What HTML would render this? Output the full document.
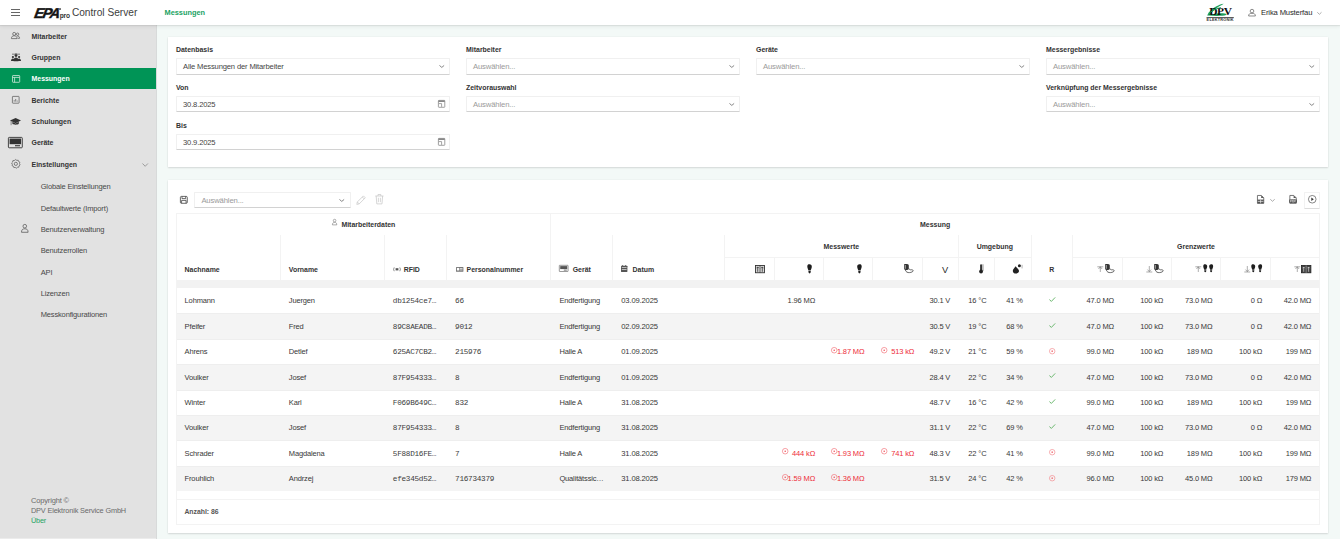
<!DOCTYPE html><html><head><meta charset="utf-8"><style>
html,body{margin:0;padding:0;}
body{width:1340px;height:539px;overflow:hidden;position:relative;background:#f3f9f7;font-family:"Liberation Sans", sans-serif;}
.t{position:absolute;white-space:nowrap;}
svg{overflow:visible}
</style></head><body>
<div style="position:absolute;left:157.00px;top:25.00px;width:1183.00px;height:514.00px;background:#f3f9f7"></div>
<div style="position:absolute;left:167.60px;top:36.80px;width:1160.40px;height:129.90px;background:#fff;box-shadow:0 1px 1.6px rgba(0,0,0,0.12),0 0 1.5px rgba(0,0,0,0.07)"></div>
<div style="position:absolute;left:167.60px;top:179.80px;width:1160.40px;height:353.00px;background:#fff;box-shadow:0 1px 1.6px rgba(0,0,0,0.12),0 0 1.5px rgba(0,0,0,0.07)"></div>
<div style="position:absolute;left:0.00px;top:25.00px;width:156.00px;height:514.00px;background:#e2e2e2"></div>
<div style="position:absolute;left:156.00px;top:25.00px;width:1.20px;height:514.00px;background:#d8dada"></div>
<div style="position:absolute;left:0.00px;top:537.50px;width:156.00px;height:1.50px;background:#ececec"></div>
<div class="t" style="left:31.50px;top:32.52px;font-size:6.95px;line-height:8.34px;color:#333;font-weight:bold;font-family:'Liberation Sans', sans-serif;">Mitarbeiter</div>
<div class="t" style="left:31.50px;top:53.86px;font-size:6.95px;line-height:8.34px;color:#333;font-weight:bold;font-family:'Liberation Sans', sans-serif;">Gruppen</div>
<div style="position:absolute;left:0.00px;top:67.67px;width:156.00px;height:21.33px;background:#009456"></div>
<div class="t" style="left:31.50px;top:75.19px;font-size:6.95px;line-height:8.34px;color:#fff;font-weight:bold;font-family:'Liberation Sans', sans-serif;">Messungen</div>
<div class="t" style="left:31.50px;top:96.52px;font-size:6.95px;line-height:8.34px;color:#333;font-weight:bold;font-family:'Liberation Sans', sans-serif;">Berichte</div>
<div class="t" style="left:31.50px;top:117.86px;font-size:6.95px;line-height:8.34px;color:#333;font-weight:bold;font-family:'Liberation Sans', sans-serif;">Schulungen</div>
<div class="t" style="left:31.50px;top:139.19px;font-size:6.95px;line-height:8.34px;color:#333;font-weight:bold;font-family:'Liberation Sans', sans-serif;">Geräte</div>
<div class="t" style="left:31.50px;top:160.52px;font-size:6.95px;line-height:8.34px;color:#333;font-weight:bold;font-family:'Liberation Sans', sans-serif;">Einstellungen</div>
<div class="t" style="left:40.70px;top:182.43px;font-size:7.5px;line-height:9.0px;color:#484848;font-weight:normal;font-family:'Liberation Sans', sans-serif;letter-spacing:-0.15px;">Globale Einstellungen</div>
<div class="t" style="left:40.70px;top:203.77px;font-size:7.5px;line-height:9.0px;color:#484848;font-weight:normal;font-family:'Liberation Sans', sans-serif;letter-spacing:-0.15px;">Defaultwerte (Import)</div>
<div class="t" style="left:40.70px;top:225.10px;font-size:7.5px;line-height:9.0px;color:#484848;font-weight:normal;font-family:'Liberation Sans', sans-serif;letter-spacing:-0.15px;">Benutzerverwaltung</div>
<div class="t" style="left:40.70px;top:246.43px;font-size:7.5px;line-height:9.0px;color:#484848;font-weight:normal;font-family:'Liberation Sans', sans-serif;letter-spacing:-0.15px;">Benutzerrollen</div>
<div class="t" style="left:40.70px;top:267.77px;font-size:7.5px;line-height:9.0px;color:#484848;font-weight:normal;font-family:'Liberation Sans', sans-serif;letter-spacing:-0.15px;">API</div>
<div class="t" style="left:40.70px;top:289.10px;font-size:7.5px;line-height:9.0px;color:#484848;font-weight:normal;font-family:'Liberation Sans', sans-serif;letter-spacing:-0.15px;">Lizenzen</div>
<div class="t" style="left:40.70px;top:310.43px;font-size:7.5px;line-height:9.0px;color:#484848;font-weight:normal;font-family:'Liberation Sans', sans-serif;letter-spacing:-0.15px;">Messkonfigurationen</div>
<svg style="position:absolute;left:142.00px;top:162.60px" width="6.4" height="4" viewBox="0 0 6.4 4"><path d="M0.5 0.5 L3.2 3.3 L5.9 0.5" fill="none" stroke="#8a8a8a" stroke-width="0.8"/></svg>
<svg style="position:absolute;left:11.00px;top:32.20px" width="9" height="7" viewBox="0 0 9 7"><g fill="none" stroke="#555" stroke-width="0.7"><circle cx="3.2" cy="1.9" r="1.5"/><path d="M0.4 6.6 C0.4 4.4 1.6 3.8 3.2 3.8 C4.8 3.8 6 4.4 6 6.6 Z"/><circle cx="6.6" cy="2.2" r="1.2"/><path d="M6.2 4 C7.6 4 8.6 4.6 8.6 6.3 L6.6 6.3"/></g></svg>
<svg style="position:absolute;left:10.60px;top:53.00px" width="10" height="8.3" viewBox="0 0 10 8.3"><g fill="#333"><circle cx="5" cy="2.6" r="1.4"/><path d="M2.6 8.3 C2.6 5.6 3.6 4.6 5 4.6 C6.4 4.6 7.4 5.6 7.4 8.3Z"/><circle cx="1.9" cy="4" r="1.1"/><path d="M0 8 C0 6.2 0.8 5.4 1.9 5.4 C3 5.4 3.3 6 3.3 8Z"/><circle cx="8.1" cy="4" r="1.1"/><path d="M6.7 8 C6.7 6 7 5.4 8.1 5.4 C9.2 5.4 10 6.2 10 8Z"/><rect x="1" y="0.8" width="8" height="0.6"/><rect x="4.7" y="0" width="0.6" height="1.2"/></g></svg>
<svg style="position:absolute;left:11.70px;top:75.20px" width="8.2" height="7.8" viewBox="0 0 8.2 7.8"><g fill="none" stroke="#cfe9dc" stroke-width="0.8"><rect x="0.5" y="0.5" width="7.2" height="6.8" rx="0.6"/><path d="M0.5 2.4 H7.7 M2.6 2.4 V7.3"/></g></svg>
<svg style="position:absolute;left:11.80px;top:96.30px" width="7.5" height="7.6" viewBox="0 0 7.5 7.6"><g fill="none" stroke="#555" stroke-width="0.7"><rect x="0.4" y="0.4" width="6.7" height="6.8" rx="0.5"/><path d="M2.2 5.6 V4.2 M3.7 5.6 V3 M5.2 5.6 V4.6"/></g></svg>
<svg style="position:absolute;left:9.80px;top:118.40px" width="11" height="7.6" viewBox="0 0 11 7.6"><g fill="#333"><path d="M0 2.6 L5.6 0 L11 2.6 L5.6 5.2Z"/><path d="M2.4 3.8 V5.8 C3.6 7 7.6 7 8.8 5.8 V3.8 L5.6 5.4Z"/><rect x="0.8" y="2.6" width="0.5" height="4.6"/></g></svg>
<svg style="position:absolute;left:8.20px;top:136.80px" width="14.7" height="11.2" viewBox="0 0 14.7 11.2"><g><rect x="0.4" y="0.4" width="13.9" height="10.4" rx="0.8" fill="none" stroke="#333" stroke-width="0.9"/><rect x="1.6" y="1.6" width="11.5" height="5.6" fill="#333"/><rect x="7" y="8.2" width="5" height="1.1" fill="#333"/></g></svg>
<svg style="position:absolute;left:10.70px;top:159.40px" width="9.5" height="9.5" viewBox="0 0 9.5 9.5"><g fill="none" stroke="#555" stroke-width="0.7"><path d="M4.75 0.5 L5.8 1.4 L7.2 1.2 L7.6 2.5 L8.9 3.2 L8.5 4.6 L9.1 5.9 L8 6.8 L7.8 8.2 L6.4 8.3 L5.3 9.2 L4.2 8.4 L2.8 8.5 L2.3 7.2 L1 6.6 L1.4 5.2 L0.6 4 L1.7 3 L1.9 1.6 L3.3 1.5Z"/><circle cx="4.85" cy="4.85" r="1.6"/></g></svg>
<svg style="position:absolute;left:21.30px;top:224.00px" width="7.6" height="8.7" viewBox="0 0 7.6 8.7"><g fill="none" stroke="#555" stroke-width="0.75"><circle cx="3.8" cy="2.2" r="1.8"/><path d="M0.5 8.3 C0.5 5.6 1.8 4.8 3.8 4.8 C5.8 4.8 7.1 5.6 7.1 8.3 Z"/></g></svg>
<div class="t" style="left:30.90px;top:495.90px;font-size:7.5px;line-height:9.0px;color:#6a6a6a;font-weight:normal;font-family:'Liberation Sans', sans-serif;letter-spacing:-0.15px;">Copyright ©</div>
<div class="t" style="left:30.90px;top:506.64px;font-size:7.35px;line-height:8.82px;color:#6a6a6a;font-weight:normal;font-family:'Liberation Sans', sans-serif;letter-spacing:-0.15px;">DPV Elektronik Service GmbH</div>
<div class="t" style="left:30.90px;top:517.19px;font-size:7.3px;line-height:8.76px;color:#1fa463;font-weight:normal;font-family:'Liberation Sans', sans-serif;letter-spacing:-0.15px;">Über</div>
<div style="position:absolute;left:0.00px;top:0.00px;width:1340.00px;height:25.00px;background:#fff;box-shadow:0 1px 1px rgba(0,0,0,0.07),0 1.5px 4px rgba(0,0,0,0.05)"></div>
<div style="position:absolute;left:11.10px;top:9.00px;width:9.00px;height:0.80px;background:#666"></div>
<div style="position:absolute;left:11.10px;top:11.90px;width:9.00px;height:0.80px;background:#666"></div>
<div style="position:absolute;left:11.10px;top:14.80px;width:9.00px;height:0.80px;background:#666"></div>
<div class="t" style="left:32.60px;top:5.36px;font-size:14.2px;line-height:17.04px;color:#141414;font-weight:bold;font-family:'Liberation Sans', sans-serif;font-style:italic;letter-spacing:-1.2px;transform:skewX(-10deg);transform-origin:0 100%;-webkit-text-stroke:0.45px #141414;">EPA</div>
<div class="t" style="left:59.80px;top:11.95px;font-size:6.6px;line-height:7.92px;color:#333;font-weight:bold;font-family:'Liberation Sans', sans-serif;letter-spacing:-0.2px;">pro</div>
<div style="position:absolute;left:59.30px;top:8.20px;width:1.70px;height:1.70px;border-radius:50%;background:#666"></div>
<div class="t" style="left:71.90px;top:7.18px;font-size:10.16px;line-height:12.192px;color:#404040;font-weight:normal;font-family:'Liberation Sans', sans-serif;">Control Server</div>
<div class="t" style="left:164.50px;top:8.83px;font-size:7.36px;line-height:8.832px;color:#1aa262;font-weight:bold;font-family:'Liberation Sans', sans-serif;">Messungen</div>
<svg style="position:absolute;left:1204.00px;top:2.00px" width="32" height="20" viewBox="0 0 32 20"><path d="M3.2 13.4 C4.5 10 8 6.5 12 4.5 C15 3 17.5 2 19.6 1.8 C19.2 2.6 17 3.2 14.5 4.8 C10.5 7.3 7.5 10.5 5.8 13.2 C9 11.6 16 11 20.5 11.5 C22 11.7 23.5 12.2 22 13 C19 14 12 14.2 3.2 13.4Z" fill="#1e9f5c"/><text x="5.2" y="12.9" font-family="Liberation Serif" font-weight="bold" font-size="11.4" fill="#0d0d0d" letter-spacing="-0.35">DPV</text><path d="M6 10.5 C9 8 13 6.2 17 5.6" fill="none" stroke="#1e9f5c" stroke-width="0.9"/><rect x="2.5" y="15.1" width="27.3" height="0.8" fill="#333"/><text x="2.6" y="18.6" font-family="Liberation Sans" font-weight="bold" font-size="3.6" fill="#333" letter-spacing="0.2" textLength="27.2" lengthAdjust="spacingAndGlyphs">ELEKTRONIK</text></svg>
<svg style="position:absolute;left:1248.00px;top:8.90px" width="8" height="7.4" viewBox="0 0 8 7.4"><g fill="none" stroke="#666" stroke-width="0.75"><circle cx="4" cy="2.1" r="1.8"/><path d="M0.6 7 C0.6 4.9 2 4.3 4 4.3 C6 4.3 7.4 4.9 7.4 7 Z"/></g></svg>
<div class="t" style="left:1261.00px;top:8.26px;font-size:7.65px;line-height:9.18px;color:#2a2a2a;font-weight:normal;font-family:'Liberation Sans', sans-serif;letter-spacing:-0.15px;">Erika Musterfau</div>
<svg style="position:absolute;left:1317.00px;top:11.70px" width="4.8" height="2.6" viewBox="0 0 4.8 2.6"><path d="M0.3 0.3 L2.4 2.3 L4.5 0.3" fill="none" stroke="#888" stroke-width="0.7"/></svg>
<div class="t" style="left:176.00px;top:46.02px;font-size:6.95px;line-height:8.34px;color:#333;font-weight:bold;font-family:'Liberation Sans', sans-serif;">Datenbasis</div>
<div class="t" style="left:466.00px;top:46.02px;font-size:6.95px;line-height:8.34px;color:#333;font-weight:bold;font-family:'Liberation Sans', sans-serif;">Mitarbeiter</div>
<div class="t" style="left:756.00px;top:46.02px;font-size:6.95px;line-height:8.34px;color:#333;font-weight:bold;font-family:'Liberation Sans', sans-serif;">Geräte</div>
<div class="t" style="left:1046.00px;top:46.02px;font-size:6.95px;line-height:8.34px;color:#333;font-weight:bold;font-family:'Liberation Sans', sans-serif;">Messergebnisse</div>
<div class="t" style="left:176.00px;top:84.22px;font-size:6.95px;line-height:8.34px;color:#333;font-weight:bold;font-family:'Liberation Sans', sans-serif;">Von</div>
<div class="t" style="left:466.00px;top:84.22px;font-size:6.95px;line-height:8.34px;color:#333;font-weight:bold;font-family:'Liberation Sans', sans-serif;">Zeitvorauswahl</div>
<div class="t" style="left:1046.00px;top:84.22px;font-size:6.95px;line-height:8.34px;color:#333;font-weight:bold;font-family:'Liberation Sans', sans-serif;">Verknüpfung der Messergebnisse</div>
<div class="t" style="left:176.00px;top:122.32px;font-size:6.95px;line-height:8.34px;color:#333;font-weight:bold;font-family:'Liberation Sans', sans-serif;">Bis</div>
<div style="position:absolute;left:176.00px;top:58.40px;width:274.00px;height:16.20px;background:#fff;border:0.7px solid #f0f0f0;border-bottom:1px solid #d2d2d2;box-sizing:border-box;border-radius:1px"></div>
<div class="t" style="left:183.00px;top:62.31px;font-size:7.6px;line-height:9.12px;color:#444;font-weight:normal;font-family:'Liberation Sans', sans-serif;letter-spacing:-0.15px;">Alle Messungen der Mitarbeiter</div>
<svg style="position:absolute;left:438.90px;top:64.80px" width="5.6" height="2.9" viewBox="0 0 5.6 2.9"><path d="M0.45 0.45 L2.8 2.4 L5.15 0.45" fill="none" stroke="#777" stroke-width="0.9"/></svg>
<div style="position:absolute;left:466.00px;top:58.40px;width:274.00px;height:16.20px;background:#fff;border:0.7px solid #f0f0f0;border-bottom:1px solid #d2d2d2;box-sizing:border-box;border-radius:1px"></div>
<div class="t" style="left:473.00px;top:62.21px;font-size:7.7px;line-height:9.24px;color:#9a9a9a;font-weight:normal;font-family:'Liberation Sans', sans-serif;letter-spacing:-0.15px;">Auswählen...</div>
<svg style="position:absolute;left:728.90px;top:64.80px" width="5.6" height="2.9" viewBox="0 0 5.6 2.9"><path d="M0.45 0.45 L2.8 2.4 L5.15 0.45" fill="none" stroke="#777" stroke-width="0.9"/></svg>
<div style="position:absolute;left:756.00px;top:58.40px;width:274.00px;height:16.20px;background:#fff;border:0.7px solid #f0f0f0;border-bottom:1px solid #d2d2d2;box-sizing:border-box;border-radius:1px"></div>
<div class="t" style="left:763.00px;top:62.21px;font-size:7.7px;line-height:9.24px;color:#9a9a9a;font-weight:normal;font-family:'Liberation Sans', sans-serif;letter-spacing:-0.15px;">Auswählen...</div>
<svg style="position:absolute;left:1018.90px;top:64.80px" width="5.6" height="2.9" viewBox="0 0 5.6 2.9"><path d="M0.45 0.45 L2.8 2.4 L5.15 0.45" fill="none" stroke="#777" stroke-width="0.9"/></svg>
<div style="position:absolute;left:1046.00px;top:58.40px;width:274.00px;height:16.20px;background:#fff;border:0.7px solid #f0f0f0;border-bottom:1px solid #d2d2d2;box-sizing:border-box;border-radius:1px"></div>
<div class="t" style="left:1053.00px;top:62.21px;font-size:7.7px;line-height:9.24px;color:#9a9a9a;font-weight:normal;font-family:'Liberation Sans', sans-serif;letter-spacing:-0.15px;">Auswählen...</div>
<svg style="position:absolute;left:1308.90px;top:64.80px" width="5.6" height="2.9" viewBox="0 0 5.6 2.9"><path d="M0.45 0.45 L2.8 2.4 L5.15 0.45" fill="none" stroke="#777" stroke-width="0.9"/></svg>
<div style="position:absolute;left:176.00px;top:96.20px;width:274.00px;height:16.20px;background:#fff;border:0.7px solid #f0f0f0;border-bottom:1px solid #d2d2d2;box-sizing:border-box;border-radius:1px"></div>
<div class="t" style="left:183.00px;top:100.11px;font-size:7.6px;line-height:9.12px;color:#444;font-weight:normal;font-family:'Liberation Sans', sans-serif;letter-spacing:-0.15px;">30.8.2025</div>
<svg style="position:absolute;left:437.90px;top:100.10px" width="7.2" height="7.7" viewBox="0 0 7.2 7.7"><g><rect x="0.4" y="0.4" width="6.4" height="6.9" rx="0.5" fill="#fff" stroke="#888" stroke-width="0.8"/><rect x="0.4" y="0.4" width="6.4" height="1.6" fill="#888"/><path d="M0.9 3.6 H3.6 V6.9" fill="none" stroke="#999" stroke-width="0.9"/></g></svg>
<div style="position:absolute;left:466.00px;top:96.20px;width:274.00px;height:16.20px;background:#fff;border:0.7px solid #f0f0f0;border-bottom:1px solid #d2d2d2;box-sizing:border-box;border-radius:1px"></div>
<div class="t" style="left:473.00px;top:100.01px;font-size:7.7px;line-height:9.24px;color:#9a9a9a;font-weight:normal;font-family:'Liberation Sans', sans-serif;letter-spacing:-0.15px;">Auswählen...</div>
<svg style="position:absolute;left:728.90px;top:102.60px" width="5.6" height="2.9" viewBox="0 0 5.6 2.9"><path d="M0.45 0.45 L2.8 2.4 L5.15 0.45" fill="none" stroke="#777" stroke-width="0.9"/></svg>
<div style="position:absolute;left:1046.00px;top:96.20px;width:274.00px;height:16.20px;background:#fff;border:0.7px solid #f0f0f0;border-bottom:1px solid #d2d2d2;box-sizing:border-box;border-radius:1px"></div>
<div class="t" style="left:1053.00px;top:100.01px;font-size:7.7px;line-height:9.24px;color:#9a9a9a;font-weight:normal;font-family:'Liberation Sans', sans-serif;letter-spacing:-0.15px;">Auswählen...</div>
<svg style="position:absolute;left:1308.90px;top:102.60px" width="5.6" height="2.9" viewBox="0 0 5.6 2.9"><path d="M0.45 0.45 L2.8 2.4 L5.15 0.45" fill="none" stroke="#777" stroke-width="0.9"/></svg>
<div style="position:absolute;left:176.00px;top:134.00px;width:274.00px;height:16.20px;background:#fff;border:0.7px solid #f0f0f0;border-bottom:1px solid #d2d2d2;box-sizing:border-box;border-radius:1px"></div>
<div class="t" style="left:183.00px;top:137.91px;font-size:7.6px;line-height:9.12px;color:#444;font-weight:normal;font-family:'Liberation Sans', sans-serif;letter-spacing:-0.15px;">30.9.2025</div>
<svg style="position:absolute;left:437.90px;top:137.90px" width="7.2" height="7.7" viewBox="0 0 7.2 7.7"><g><rect x="0.4" y="0.4" width="6.4" height="6.9" rx="0.5" fill="#fff" stroke="#888" stroke-width="0.8"/><rect x="0.4" y="0.4" width="6.4" height="1.6" fill="#888"/><path d="M0.9 3.6 H3.6 V6.9" fill="none" stroke="#999" stroke-width="0.9"/></g></svg>
<svg style="position:absolute;left:180.00px;top:195.90px" width="7.7" height="7.7" viewBox="0 0 7.7 7.7"><g fill="none" stroke="#444" stroke-width="0.8"><rect x="0.4" y="0.4" width="6.9" height="6.9" rx="1"/><path d="M2 0.4 V2.6 H5.7 V0.4 M1.6 4.4 H6.1 V7.3 M1.6 4.4 V7.3"/></g></svg>
<div style="position:absolute;left:194.00px;top:192.40px;width:157.00px;height:16.00px;background:#fff;border:0.7px solid #f0f0f0;border-bottom:1px solid #d2d2d2;box-sizing:border-box;border-radius:1px"></div>
<div class="t" style="left:201.40px;top:195.91px;font-size:7.7px;line-height:9.24px;color:#9a9a9a;font-weight:normal;font-family:'Liberation Sans', sans-serif;letter-spacing:-0.15px;">Auswählen...</div>
<svg style="position:absolute;left:339.40px;top:198.60px" width="5.6" height="2.9" viewBox="0 0 5.6 2.9"><path d="M0.45 0.45 L2.8 2.4 L5.15 0.45" fill="none" stroke="#777" stroke-width="0.9"/></svg>
<svg style="position:absolute;left:355.60px;top:194.60px" width="10.4" height="10.2" viewBox="0 0 10.4 10.2"><g fill="none" stroke="#c8c8c8" stroke-width="0.75"><path d="M0.8 9.4 L1.3 7 L7.4 0.9 L9.3 2.8 L3.2 8.9Z M6.3 2 L8.2 3.9 M1.3 7 L3.2 8.9"/></g></svg>
<svg style="position:absolute;left:375.20px;top:194.40px" width="8.8" height="10.4" viewBox="0 0 8.8 10.4"><g fill="none" stroke="#c8c8c8" stroke-width="0.75"><path d="M0.3 2 H8.5 M3 2 V0.5 H5.8 V2 M1.2 2 L1.8 9.9 H7 L7.6 2 M3.4 3.8 V8.2 M5.4 3.8 V8.2"/></g></svg>
<svg style="position:absolute;left:1257.20px;top:195.00px" width="7.2" height="8.8" viewBox="0 0 7.2 8.8"><g><path d="M0.45 0.45 H4.4 L6.75 2.8 V8.35 H0.45Z" fill="#fff" stroke="#555" stroke-width="0.8"/><path d="M4.2 0.4 V3 H6.8Z" fill="#555"/><rect x="0.45" y="4.6" width="6.3" height="3.8" fill="#555"/><path d="M3.6 4.8 V8.3 M0.8 6.4 H6.4" stroke="#fff" stroke-width="0.6"/></g></svg>
<svg style="position:absolute;left:1269.90px;top:198.80px" width="5" height="2.6" viewBox="0 0 5 2.6"><path d="M0.3 0.3 L2.5 2.3 L4.7 0.3" fill="none" stroke="#888" stroke-width="0.7"/></svg>
<svg style="position:absolute;left:1288.90px;top:195.00px" width="8.1" height="8.8" viewBox="0 0 8.1 8.8"><g><path d="M0.85 0.45 H4.8 L7.25 2.9 V8.35 H0.85Z" fill="#fff" stroke="#555" stroke-width="0.8"/><path d="M4.6 0.4 V3.1 H7.3Z" fill="#555"/><rect x="0.1" y="4.3" width="7.9" height="3.6" rx="1.2" fill="#555"/><path d="M1.4 7.2 V5 H2.3 Q2.9 5 2.9 5.7 Q2.9 6.3 2.3 6.3 H1.4 M3.6 7.2 V5 H4.3 Q5 5 5 6.1 Q5 7.2 4.3 7.2Z M5.8 7.2 V5 H6.9 M5.8 6.1 H6.6" fill="none" stroke="#fff" stroke-width="0.45"/></g></svg>
<div style="position:absolute;left:1303.80px;top:192.00px;width:16.10px;height:17.30px;background:#fff;border:0.6px solid #f2f2f2;border-bottom:1px solid #dcdcdc;box-sizing:border-box;border-radius:1px"></div>
<svg style="position:absolute;left:1307.50px;top:195.40px" width="8.5" height="8.5" viewBox="0 0 8.5 8.5"><g><circle cx="4.25" cy="4.25" r="3.8" fill="none" stroke="#555" stroke-width="0.7"/><path d="M3.3 2.6 L5.8 4.25 L3.3 5.9Z" fill="#333"/></g></svg>
<div style="position:absolute;left:176.00px;top:212.70px;width:1143.70px;height:312.20px;border:0.8px solid #f3f3f3;box-sizing:border-box"></div>
<div style="position:absolute;left:176.80px;top:279.70px;width:1142.10px;height:8.30px;background:#f2f2f2"></div>
<div style="position:absolute;left:176.80px;top:313.40px;width:1142.10px;height:25.40px;background:#f4f4f4"></div>
<div style="position:absolute;left:176.80px;top:313.40px;width:1142.10px;height:0.80px;background:#eeeeee"></div>
<div style="position:absolute;left:176.80px;top:338.80px;width:1142.10px;height:0.80px;background:#eeeeee"></div>
<div style="position:absolute;left:176.80px;top:364.20px;width:1142.10px;height:25.40px;background:#f4f4f4"></div>
<div style="position:absolute;left:176.80px;top:364.20px;width:1142.10px;height:0.80px;background:#eeeeee"></div>
<div style="position:absolute;left:176.80px;top:389.60px;width:1142.10px;height:0.80px;background:#eeeeee"></div>
<div style="position:absolute;left:176.80px;top:415.00px;width:1142.10px;height:25.40px;background:#f4f4f4"></div>
<div style="position:absolute;left:176.80px;top:415.00px;width:1142.10px;height:0.80px;background:#eeeeee"></div>
<div style="position:absolute;left:176.80px;top:440.40px;width:1142.10px;height:0.80px;background:#eeeeee"></div>
<div style="position:absolute;left:176.80px;top:465.80px;width:1142.10px;height:25.40px;background:#f4f4f4"></div>
<div style="position:absolute;left:176.80px;top:465.80px;width:1142.10px;height:0.80px;background:#eeeeee"></div>
<div style="position:absolute;left:176.00px;top:498.50px;width:1143.70px;height:0.80px;background:#f3f3f3"></div>
<div class="t" style="left:184.40px;top:508.42px;font-size:6.85px;line-height:8.22px;color:#555;font-weight:bold;font-family:'Liberation Sans', sans-serif;">Anzahl: 86</div>
<div style="position:absolute;left:550.20px;top:212.70px;width:0.80px;height:67.00px;background:#f3f3f3"></div>
<div style="position:absolute;left:279.80px;top:234.90px;width:0.80px;height:44.80px;background:#f3f3f3"></div>
<div style="position:absolute;left:383.80px;top:234.90px;width:0.80px;height:44.80px;background:#f3f3f3"></div>
<div style="position:absolute;left:445.60px;top:234.90px;width:0.80px;height:44.80px;background:#f3f3f3"></div>
<div style="position:absolute;left:612.20px;top:234.90px;width:0.80px;height:44.80px;background:#f3f3f3"></div>
<div style="position:absolute;left:723.90px;top:234.90px;width:0.80px;height:44.80px;background:#f3f3f3"></div>
<div style="position:absolute;left:958.00px;top:234.90px;width:0.80px;height:44.80px;background:#f3f3f3"></div>
<div style="position:absolute;left:1030.80px;top:234.90px;width:0.80px;height:44.80px;background:#f3f3f3"></div>
<div style="position:absolute;left:1071.80px;top:234.90px;width:0.80px;height:44.80px;background:#f3f3f3"></div>
<div style="position:absolute;left:774.00px;top:257.30px;width:0.80px;height:22.40px;background:#f3f3f3"></div>
<div style="position:absolute;left:823.00px;top:257.30px;width:0.80px;height:22.40px;background:#f3f3f3"></div>
<div style="position:absolute;left:872.30px;top:257.30px;width:0.80px;height:22.40px;background:#f3f3f3"></div>
<div style="position:absolute;left:922.10px;top:257.30px;width:0.80px;height:22.40px;background:#f3f3f3"></div>
<div style="position:absolute;left:994.40px;top:257.30px;width:0.80px;height:22.40px;background:#f3f3f3"></div>
<div style="position:absolute;left:1122.00px;top:257.30px;width:0.80px;height:22.40px;background:#f3f3f3"></div>
<div style="position:absolute;left:1171.20px;top:257.30px;width:0.80px;height:22.40px;background:#f3f3f3"></div>
<div style="position:absolute;left:1220.40px;top:257.30px;width:0.80px;height:22.40px;background:#f3f3f3"></div>
<div style="position:absolute;left:1270.10px;top:257.30px;width:0.80px;height:22.40px;background:#f3f3f3"></div>
<div style="position:absolute;left:724.30px;top:256.90px;width:306.90px;height:0.80px;background:#f3f3f3"></div>
<div style="position:absolute;left:1072.20px;top:256.90px;width:247.50px;height:0.80px;background:#f3f3f3"></div>
<svg style="position:absolute;left:331.70px;top:219.40px" width="5.2" height="6.2" viewBox="0 0 5.2 6.2"><g fill="none" stroke="#777" stroke-width="0.6"><circle cx="2.6" cy="1.6" r="1.3"/><path d="M0.4 5.9 C0.4 4 1.3 3.4 2.6 3.4 C3.9 3.4 4.8 4 4.8 5.9Z"/></g></svg>
<div class="t" style="left:341.40px;top:220.92px;font-size:6.95px;line-height:8.34px;color:#333;font-weight:bold;font-family:'Liberation Sans', sans-serif;">Mitarbeiterdaten</div>
<div class="t" style="left:735.15px;width:400px;text-align:center;top:220.92px;font-size:6.95px;line-height:8.34px;color:#333;font-weight:bold;font-family:'Liberation Sans', sans-serif;">Messung</div>
<div class="t" style="left:641.35px;width:400px;text-align:center;top:242.82px;font-size:6.95px;line-height:8.34px;color:#333;font-weight:bold;font-family:'Liberation Sans', sans-serif;">Messwerte</div>
<div class="t" style="left:794.80px;width:400px;text-align:center;top:242.82px;font-size:6.95px;line-height:8.34px;color:#333;font-weight:bold;font-family:'Liberation Sans', sans-serif;">Umgebung</div>
<div class="t" style="left:995.95px;width:400px;text-align:center;top:242.82px;font-size:6.95px;line-height:8.34px;color:#333;font-weight:bold;font-family:'Liberation Sans', sans-serif;">Grenzwerte</div>
<div class="t" style="left:184.60px;top:266.22px;font-size:6.95px;line-height:8.34px;color:#333;font-weight:bold;font-family:'Liberation Sans', sans-serif;">Nachname</div>
<div class="t" style="left:288.80px;top:266.22px;font-size:6.95px;line-height:8.34px;color:#333;font-weight:bold;font-family:'Liberation Sans', sans-serif;">Vorname</div>
<svg style="position:absolute;left:393.30px;top:266.60px" width="8" height="4.6" viewBox="0 0 8 4.6"><g fill="none" stroke="#555" stroke-width="0.65"><path d="M1.2 0.4 Q0 2.3 1.2 4.2 M6.8 0.4 Q8 2.3 6.8 4.2"/><rect x="2.6" y="1.2" width="2.8" height="2.2" fill="#555" stroke="none"/></g></svg>
<div class="t" style="left:403.70px;top:266.22px;font-size:6.95px;line-height:8.34px;color:#333;font-weight:bold;font-family:'Liberation Sans', sans-serif;">RFID</div>
<svg style="position:absolute;left:455.50px;top:266.60px" width="7.4" height="4.8" viewBox="0 0 7.4 4.8"><g fill="#777"><rect x="0" y="0" width="7.4" height="4.8" rx="0.5"/><rect x="0.9" y="0.9" width="2.4" height="2.6" fill="#fff"/><rect x="4" y="1.2" width="2.6" height="0.7" fill="#fff"/><rect x="4" y="2.6" width="2.6" height="0.7" fill="#fff"/></g></svg>
<div class="t" style="left:466.50px;top:266.22px;font-size:6.95px;line-height:8.34px;color:#333;font-weight:bold;font-family:'Liberation Sans', sans-serif;">Personalnummer</div>
<svg style="position:absolute;left:559.40px;top:265.40px" width="9.4" height="6.8" viewBox="0 0 9.4 6.8"><g><rect x="0.3" y="0.3" width="8.8" height="6.2" rx="0.4" fill="none" stroke="#555" stroke-width="0.6"/><rect x="1.2" y="1.1" width="7" height="3" fill="#555"/><rect x="4.8" y="4.7" width="3" height="0.8" fill="#555"/></g></svg>
<div class="t" style="left:572.70px;top:266.22px;font-size:6.95px;line-height:8.34px;color:#333;font-weight:bold;font-family:'Liberation Sans', sans-serif;">Gerät</div>
<svg style="position:absolute;left:621.30px;top:265.20px" width="6.4" height="7" viewBox="0 0 6.4 7"><g fill="#555"><rect x="0" y="0.8" width="6.4" height="6.2" rx="0.4"/><rect x="0.8" y="2.4" width="4.8" height="0.6" fill="#fff"/><rect x="0.8" y="4" width="4.8" height="0.6" fill="#fff"/><rect x="1.3" y="0" width="0.8" height="1.4"/><rect x="4.3" y="0" width="0.8" height="1.4"/></g></svg>
<div class="t" style="left:632.60px;top:266.22px;font-size:6.95px;line-height:8.34px;color:#333;font-weight:bold;font-family:'Liberation Sans', sans-serif;">Datum</div>
<svg style="position:absolute;left:755.00px;top:264.60px" width="10" height="8.2" viewBox="0 0 10 8.2"><g><rect x="0.45" y="0.45" width="9.1" height="7.3" fill="#d6d6d6" stroke="#333" stroke-width="0.9"/><path d="M5 0.4 V7.8" stroke="#333" stroke-width="0.7"/><path d="M2.7 6.8 V2.2 M1.6 3.2 L2.7 1.9 L3.8 3.2 M7.3 6.8 V2.2 M6.2 3.2 L7.3 1.9 L8.4 3.2" fill="none" stroke="#222" stroke-width="0.7"/></g></svg>
<svg style="position:absolute;left:807.10px;top:263.80px" width="5" height="9.6" viewBox="0 0 5 9.6"><g fill="#1e1e1e"><path d="M1.6 0.3 C3.6 -0.2 5 1 4.8 2.9 C4.6 4.6 3.9 5.4 3.7 6.4 L1.4 6.4 C1.1 5.2 0.3 4 0.3 2.5 C0.3 1.4 0.8 0.5 1.6 0.3Z"/><path d="M1.5 7.1 H3.7 C3.9 7.9 3.6 9.4 2.6 9.4 C1.6 9.4 1.2 8 1.5 7.1Z"/></g></svg>
<svg style="position:absolute;left:856.90px;top:263.80px" width="5" height="9.6" viewBox="0 0 5 9.6"><g fill="#1e1e1e" transform="translate(5,0) scale(-1,1)"><path d="M1.6 0.3 C3.6 -0.2 5 1 4.8 2.9 C4.6 4.6 3.9 5.4 3.7 6.4 L1.4 6.4 C1.1 5.2 0.3 4 0.3 2.5 C0.3 1.4 0.8 0.5 1.6 0.3Z"/><path d="M1.5 7.1 H3.7 C3.9 7.9 3.6 9.4 2.6 9.4 C1.6 9.4 1.2 8 1.5 7.1Z"/></g></svg>
<svg style="position:absolute;left:903.20px;top:263.80px" width="10.8" height="9" viewBox="0 0 10.8 9"><g><path d="M1 0.8 C1 0.2 1.6 0 2.4 0 H4 C5.2 0 5.8 0.8 5.8 1.8 V4.6 C5.8 5.6 5 6 4.2 6 H2.6 C1.6 6 1 5.4 1 4.6Z" fill="#333"/><path d="M2.2 1 V4.8" stroke="#ddd" stroke-width="0.8"/><path d="M2.4 6 C2.8 8 4.6 8.8 6.6 8.6 C8.4 8.4 9.8 7.8 10.3 6.8 C10 5.8 8.8 5.6 7.4 5.8 L5.8 4.8" fill="none" stroke="#333" stroke-width="0.75"/></g></svg>
<div class="t" style="left:744.70px;width:400px;text-align:center;top:264.02px;font-size:9.8px;line-height:11.76px;color:#2a2a2a;font-weight:normal;font-family:'Liberation Sans', sans-serif;transform:scaleX(0.95);">V</div>
<svg style="position:absolute;left:979.20px;top:264.00px" width="5" height="9.5" viewBox="0 0 5 9.5"><g><rect x="2.6" y="0.3" width="2.2" height="6.8" fill="#bdbdbd"/><rect x="1.1" y="0.3" width="1.9" height="6.6" rx="0.95" fill="#333"/><circle cx="2.05" cy="7.5" r="1.9" fill="#222"/></g></svg>
<svg style="position:absolute;left:1012.20px;top:264.00px" width="11" height="9.5" viewBox="0 0 11 9.5"><g fill="#222"><path d="M3.6 2.2 C5.2 4.2 7 5.6 7 7 C7 8.6 5.6 9.5 4 9.5 C2.3 9.5 0.8 8.5 0.8 6.9 C0.8 5.4 2.4 3.9 3.6 2.2Z"/><circle cx="7.4" cy="1.8" r="1.5"/></g><rect x="9.6" y="0.8" width="0.9" height="3.6" fill="#aaa"/></svg>
<div class="t" style="left:851.70px;width:400px;text-align:center;top:266.22px;font-size:6.95px;line-height:8.34px;color:#333;font-weight:bold;font-family:'Liberation Sans', sans-serif;">R</div>
<svg style="position:absolute;left:1096.90px;top:265.80px" width="6.6" height="6" viewBox="0 0 6.6 6"><g fill="none" stroke="#777" stroke-width="0.6"><path d="M0.3 0.8 H6.3 M3.3 0.8 V6 M1.5 3 L3.3 0.8 L5.1 3"/></g></svg>
<svg style="position:absolute;left:1103.60px;top:264.20px" width="10.8" height="9" viewBox="0 0 10.8 9"><g><path d="M1 0.8 C1 0.2 1.6 0 2.4 0 H4 C5.2 0 5.8 0.8 5.8 1.8 V4.6 C5.8 5.6 5 6 4.2 6 H2.6 C1.6 6 1 5.4 1 4.6Z" fill="#333"/><path d="M2.2 1 V4.8" stroke="#ddd" stroke-width="0.8"/><path d="M2.4 6 C2.8 8 4.6 8.8 6.6 8.6 C8.4 8.4 9.8 7.8 10.3 6.8 C10 5.8 8.8 5.6 7.4 5.8 L5.8 4.8" fill="none" stroke="#333" stroke-width="0.75"/></g></svg>
<svg style="position:absolute;left:1145.70px;top:266.30px" width="6.6" height="6.4" viewBox="0 0 6.6 6.4"><g fill="none" stroke="#777" stroke-width="0.6"><path d="M0.3 6 H6.3 M3.3 0 V5.6 M1.5 3.6 L3.3 5.6 L5.1 3.6"/></g></svg>
<svg style="position:absolute;left:1152.60px;top:264.40px" width="10.8" height="9" viewBox="0 0 10.8 9"><g><path d="M1 0.8 C1 0.2 1.6 0 2.4 0 H4 C5.2 0 5.8 0.8 5.8 1.8 V4.6 C5.8 5.6 5 6 4.2 6 H2.6 C1.6 6 1 5.4 1 4.6Z" fill="#333"/><path d="M2.2 1 V4.8" stroke="#ddd" stroke-width="0.8"/><path d="M2.4 6 C2.8 8 4.6 8.8 6.6 8.6 C8.4 8.4 9.8 7.8 10.3 6.8 C10 5.8 8.8 5.6 7.4 5.8 L5.8 4.8" fill="none" stroke="#333" stroke-width="0.75"/></g></svg>
<svg style="position:absolute;left:1195.30px;top:265.80px" width="6.6" height="6" viewBox="0 0 6.6 6"><g fill="none" stroke="#777" stroke-width="0.6"><path d="M0.3 0.8 H6.3 M3.3 0.8 V6 M1.5 3 L3.3 0.8 L5.1 3"/></g></svg>
<svg style="position:absolute;left:1202.50px;top:264.40px" width="4.4" height="8.5" viewBox="0 0 4.4 8.5"><g fill="#1e1e1e" transform="scale(0.88,0.88)"><path d="M1.6 0.3 C3.6 -0.2 5 1 4.8 2.9 C4.6 4.6 3.9 5.4 3.7 6.4 L1.4 6.4 C1.1 5.2 0.3 4 0.3 2.5 C0.3 1.4 0.8 0.5 1.6 0.3Z"/><path d="M1.5 7.1 H3.7 C3.9 7.9 3.6 9.4 2.6 9.4 C1.6 9.4 1.2 8 1.5 7.1Z"/></g></svg>
<svg style="position:absolute;left:1208.80px;top:264.40px" width="4.4" height="8.5" viewBox="0 0 4.4 8.5"><g fill="#1e1e1e" transform="translate(4.4,0) scale(-0.88,0.88)"><path d="M1.6 0.3 C3.6 -0.2 5 1 4.8 2.9 C4.6 4.6 3.9 5.4 3.7 6.4 L1.4 6.4 C1.1 5.2 0.3 4 0.3 2.5 C0.3 1.4 0.8 0.5 1.6 0.3Z"/><path d="M1.5 7.1 H3.7 C3.9 7.9 3.6 9.4 2.6 9.4 C1.6 9.4 1.2 8 1.5 7.1Z"/></g></svg>
<svg style="position:absolute;left:1244.40px;top:266.30px" width="6.6" height="6.4" viewBox="0 0 6.6 6.4"><g fill="none" stroke="#777" stroke-width="0.6"><path d="M0.3 6 H6.3 M3.3 0 V5.6 M1.5 3.6 L3.3 5.6 L5.1 3.6"/></g></svg>
<svg style="position:absolute;left:1251.40px;top:264.40px" width="4.4" height="8.5" viewBox="0 0 4.4 8.5"><g fill="#1e1e1e" transform="scale(0.88,0.88)"><path d="M1.6 0.3 C3.6 -0.2 5 1 4.8 2.9 C4.6 4.6 3.9 5.4 3.7 6.4 L1.4 6.4 C1.1 5.2 0.3 4 0.3 2.5 C0.3 1.4 0.8 0.5 1.6 0.3Z"/><path d="M1.5 7.1 H3.7 C3.9 7.9 3.6 9.4 2.6 9.4 C1.6 9.4 1.2 8 1.5 7.1Z"/></g></svg>
<svg style="position:absolute;left:1257.70px;top:264.40px" width="4.4" height="8.5" viewBox="0 0 4.4 8.5"><g fill="#1e1e1e" transform="translate(4.4,0) scale(-0.88,0.88)"><path d="M1.6 0.3 C3.6 -0.2 5 1 4.8 2.9 C4.6 4.6 3.9 5.4 3.7 6.4 L1.4 6.4 C1.1 5.2 0.3 4 0.3 2.5 C0.3 1.4 0.8 0.5 1.6 0.3Z"/><path d="M1.5 7.1 H3.7 C3.9 7.9 3.6 9.4 2.6 9.4 C1.6 9.4 1.2 8 1.5 7.1Z"/></g></svg>
<svg style="position:absolute;left:1294.00px;top:265.80px" width="6.6" height="6" viewBox="0 0 6.6 6"><g fill="none" stroke="#777" stroke-width="0.6"><path d="M0.3 0.8 H6.3 M3.3 0.8 V6 M1.5 3 L3.3 0.8 L5.1 3"/></g></svg>
<svg style="position:absolute;left:1301.00px;top:264.60px" width="10.3" height="8.2" viewBox="0 0 10.3 8.2"><g><rect x="0.4" y="0.4" width="9.5" height="7.4" fill="#444" stroke="#222" stroke-width="0.8"/><path d="M5.15 0.4 V7.8" stroke="#aaa" stroke-width="0.6"/><path d="M2.7 6.8 V2.2 M1.7 3.2 L2.7 2 L3.7 3.2 M7.6 6.8 V2.2 M6.6 3.2 L7.6 2 L8.6 3.2" fill="none" stroke="#eee" stroke-width="0.6"/></g></svg>
<div class="t" style="left:184.60px;top:296.40px;font-size:7.5px;line-height:9.0px;color:#383838;font-weight:normal;font-family:'Liberation Sans', sans-serif;letter-spacing:-0.15px;">Lohmann</div>
<div class="t" style="left:288.80px;top:296.40px;font-size:7.5px;line-height:9.0px;color:#383838;font-weight:normal;font-family:'Liberation Sans', sans-serif;letter-spacing:-0.15px;">Juergen</div>
<div class="t" style="left:392.80px;top:297.41px;font-size:7.7px;line-height:9.24px;color:#3c3c3c;font-weight:normal;font-family:'Liberation Mono', monospace;letter-spacing:-0.28px;">db1254ce7…</div>
<div class="t" style="left:455.10px;top:297.41px;font-size:7.7px;line-height:9.24px;color:#3c3c3c;font-weight:normal;font-family:'Liberation Mono', monospace;letter-spacing:-0.28px;">66</div>
<div class="t" style="left:559.40px;top:296.40px;font-size:7.5px;line-height:9.0px;color:#383838;font-weight:normal;font-family:'Liberation Sans', sans-serif;letter-spacing:-0.15px;">Endfertigung</div>
<div class="t" style="left:621.30px;top:296.31px;font-size:7.6px;line-height:9.12px;color:#383838;font-weight:normal;font-family:'Liberation Sans', sans-serif;letter-spacing:-0.15px;">03.09.2025</div>
<div class="t" style="right:524.90px;top:296.40px;font-size:7.5px;line-height:9.0px;color:#383838;font-weight:normal;font-family:'Liberation Sans', sans-serif;letter-spacing:-0.15px;">1.96 MΩ</div>
<div class="t" style="right:389.80px;top:296.40px;font-size:7.5px;line-height:9.0px;color:#383838;font-weight:normal;font-family:'Liberation Sans', sans-serif;letter-spacing:-0.15px;">30.1 V</div>
<div class="t" style="right:353.60px;top:296.40px;font-size:7.5px;line-height:9.0px;color:#383838;font-weight:normal;font-family:'Liberation Sans', sans-serif;letter-spacing:-0.15px;">16 °C</div>
<div class="t" style="right:317.20px;top:296.40px;font-size:7.5px;line-height:9.0px;color:#383838;font-weight:normal;font-family:'Liberation Sans', sans-serif;letter-spacing:-0.15px;">41 %</div>
<svg style="position:absolute;left:1048.70px;top:297.20px" width="6.6" height="5" viewBox="0 0 6.6 5"><path d="M0.4 2.6 L2.4 4.4 L6.2 0.4" fill="none" stroke="#4aa84e" stroke-width="0.8"/></svg>
<div class="t" style="right:226.00px;top:296.40px;font-size:7.5px;line-height:9.0px;color:#383838;font-weight:normal;font-family:'Liberation Sans', sans-serif;letter-spacing:-0.15px;">47.0 MΩ</div>
<div class="t" style="right:176.80px;top:296.40px;font-size:7.5px;line-height:9.0px;color:#383838;font-weight:normal;font-family:'Liberation Sans', sans-serif;letter-spacing:-0.15px;">100 kΩ</div>
<div class="t" style="right:127.60px;top:296.40px;font-size:7.5px;line-height:9.0px;color:#383838;font-weight:normal;font-family:'Liberation Sans', sans-serif;letter-spacing:-0.15px;">73.0 MΩ</div>
<div class="t" style="right:77.90px;top:296.40px;font-size:7.5px;line-height:9.0px;color:#383838;font-weight:normal;font-family:'Liberation Sans', sans-serif;letter-spacing:-0.15px;">0 Ω</div>
<div class="t" style="right:28.70px;top:296.40px;font-size:7.5px;line-height:9.0px;color:#383838;font-weight:normal;font-family:'Liberation Sans', sans-serif;letter-spacing:-0.15px;">42.0 MΩ</div>
<div class="t" style="left:184.60px;top:321.80px;font-size:7.5px;line-height:9.0px;color:#383838;font-weight:normal;font-family:'Liberation Sans', sans-serif;letter-spacing:-0.15px;">Pfeifer</div>
<div class="t" style="left:288.80px;top:321.80px;font-size:7.5px;line-height:9.0px;color:#383838;font-weight:normal;font-family:'Liberation Sans', sans-serif;letter-spacing:-0.15px;">Fred</div>
<div class="t" style="left:392.80px;top:322.81px;font-size:7.7px;line-height:9.24px;color:#3c3c3c;font-weight:normal;font-family:'Liberation Mono', monospace;letter-spacing:-0.28px;">89C8AEADB…</div>
<div class="t" style="left:455.10px;top:322.81px;font-size:7.7px;line-height:9.24px;color:#3c3c3c;font-weight:normal;font-family:'Liberation Mono', monospace;letter-spacing:-0.28px;">9012</div>
<div class="t" style="left:559.40px;top:321.80px;font-size:7.5px;line-height:9.0px;color:#383838;font-weight:normal;font-family:'Liberation Sans', sans-serif;letter-spacing:-0.15px;">Endfertigung</div>
<div class="t" style="left:621.30px;top:321.71px;font-size:7.6px;line-height:9.12px;color:#383838;font-weight:normal;font-family:'Liberation Sans', sans-serif;letter-spacing:-0.15px;">02.09.2025</div>
<div class="t" style="right:389.80px;top:321.80px;font-size:7.5px;line-height:9.0px;color:#383838;font-weight:normal;font-family:'Liberation Sans', sans-serif;letter-spacing:-0.15px;">30.5 V</div>
<div class="t" style="right:353.60px;top:321.80px;font-size:7.5px;line-height:9.0px;color:#383838;font-weight:normal;font-family:'Liberation Sans', sans-serif;letter-spacing:-0.15px;">19 °C</div>
<div class="t" style="right:317.20px;top:321.80px;font-size:7.5px;line-height:9.0px;color:#383838;font-weight:normal;font-family:'Liberation Sans', sans-serif;letter-spacing:-0.15px;">68 %</div>
<svg style="position:absolute;left:1048.70px;top:322.60px" width="6.6" height="5" viewBox="0 0 6.6 5"><path d="M0.4 2.6 L2.4 4.4 L6.2 0.4" fill="none" stroke="#4aa84e" stroke-width="0.8"/></svg>
<div class="t" style="right:226.00px;top:321.80px;font-size:7.5px;line-height:9.0px;color:#383838;font-weight:normal;font-family:'Liberation Sans', sans-serif;letter-spacing:-0.15px;">47.0 MΩ</div>
<div class="t" style="right:176.80px;top:321.80px;font-size:7.5px;line-height:9.0px;color:#383838;font-weight:normal;font-family:'Liberation Sans', sans-serif;letter-spacing:-0.15px;">100 kΩ</div>
<div class="t" style="right:127.60px;top:321.80px;font-size:7.5px;line-height:9.0px;color:#383838;font-weight:normal;font-family:'Liberation Sans', sans-serif;letter-spacing:-0.15px;">73.0 MΩ</div>
<div class="t" style="right:77.90px;top:321.80px;font-size:7.5px;line-height:9.0px;color:#383838;font-weight:normal;font-family:'Liberation Sans', sans-serif;letter-spacing:-0.15px;">0 Ω</div>
<div class="t" style="right:28.70px;top:321.80px;font-size:7.5px;line-height:9.0px;color:#383838;font-weight:normal;font-family:'Liberation Sans', sans-serif;letter-spacing:-0.15px;">42.0 MΩ</div>
<div class="t" style="left:184.60px;top:347.20px;font-size:7.5px;line-height:9.0px;color:#383838;font-weight:normal;font-family:'Liberation Sans', sans-serif;letter-spacing:-0.15px;">Ahrens</div>
<div class="t" style="left:288.80px;top:347.20px;font-size:7.5px;line-height:9.0px;color:#383838;font-weight:normal;font-family:'Liberation Sans', sans-serif;letter-spacing:-0.15px;">Detlef</div>
<div class="t" style="left:392.80px;top:348.21px;font-size:7.7px;line-height:9.24px;color:#3c3c3c;font-weight:normal;font-family:'Liberation Mono', monospace;letter-spacing:-0.28px;">625AC7CB2…</div>
<div class="t" style="left:455.10px;top:348.21px;font-size:7.7px;line-height:9.24px;color:#3c3c3c;font-weight:normal;font-family:'Liberation Mono', monospace;letter-spacing:-0.28px;">215976</div>
<div class="t" style="left:559.40px;top:347.20px;font-size:7.5px;line-height:9.0px;color:#383838;font-weight:normal;font-family:'Liberation Sans', sans-serif;letter-spacing:-0.15px;">Halle A</div>
<div class="t" style="left:621.30px;top:347.11px;font-size:7.6px;line-height:9.12px;color:#383838;font-weight:normal;font-family:'Liberation Sans', sans-serif;letter-spacing:-0.15px;">01.09.2025</div>
<div class="t" style="right:475.60px;top:347.20px;font-size:7.5px;line-height:9.0px;color:#ee2e3a;font-weight:normal;font-family:'Liberation Sans', sans-serif;letter-spacing:-0.15px;">1.87 MΩ</div>
<svg style="position:absolute;left:831.10px;top:346.70px" width="6.4" height="6.4" viewBox="0 0 6.4 6.4"><g fill="none" stroke="#f0555e" stroke-width="0.55"><circle cx="3.2" cy="3.2" r="2.8"/><circle cx="3.2" cy="3.2" r="0.8" fill="#f0555e" stroke="none"/></g></svg>
<div class="t" style="right:425.80px;top:347.20px;font-size:7.5px;line-height:9.0px;color:#ee2e3a;font-weight:normal;font-family:'Liberation Sans', sans-serif;letter-spacing:-0.15px;">513 kΩ</div>
<svg style="position:absolute;left:880.90px;top:346.70px" width="6.4" height="6.4" viewBox="0 0 6.4 6.4"><g fill="none" stroke="#f0555e" stroke-width="0.55"><circle cx="3.2" cy="3.2" r="2.8"/><circle cx="3.2" cy="3.2" r="0.8" fill="#f0555e" stroke="none"/></g></svg>
<div class="t" style="right:389.80px;top:347.20px;font-size:7.5px;line-height:9.0px;color:#383838;font-weight:normal;font-family:'Liberation Sans', sans-serif;letter-spacing:-0.15px;">49.2 V</div>
<div class="t" style="right:353.60px;top:347.20px;font-size:7.5px;line-height:9.0px;color:#383838;font-weight:normal;font-family:'Liberation Sans', sans-serif;letter-spacing:-0.15px;">21 °C</div>
<div class="t" style="right:317.20px;top:347.20px;font-size:7.5px;line-height:9.0px;color:#383838;font-weight:normal;font-family:'Liberation Sans', sans-serif;letter-spacing:-0.15px;">59 %</div>
<svg style="position:absolute;left:1048.90px;top:347.70px" width="6.4" height="6.4" viewBox="0 0 6.4 6.4"><g fill="none" stroke="#f27c82" stroke-width="0.6"><circle cx="3.2" cy="3.2" r="2.75"/><circle cx="3.2" cy="3.2" r="0.85" fill="#f27c82" stroke="none"/></g></svg>
<div class="t" style="right:226.00px;top:347.20px;font-size:7.5px;line-height:9.0px;color:#383838;font-weight:normal;font-family:'Liberation Sans', sans-serif;letter-spacing:-0.15px;">99.0 MΩ</div>
<div class="t" style="right:176.80px;top:347.20px;font-size:7.5px;line-height:9.0px;color:#383838;font-weight:normal;font-family:'Liberation Sans', sans-serif;letter-spacing:-0.15px;">100 kΩ</div>
<div class="t" style="right:127.60px;top:347.20px;font-size:7.5px;line-height:9.0px;color:#383838;font-weight:normal;font-family:'Liberation Sans', sans-serif;letter-spacing:-0.15px;">189 MΩ</div>
<div class="t" style="right:77.90px;top:347.20px;font-size:7.5px;line-height:9.0px;color:#383838;font-weight:normal;font-family:'Liberation Sans', sans-serif;letter-spacing:-0.15px;">100 kΩ</div>
<div class="t" style="right:28.70px;top:347.20px;font-size:7.5px;line-height:9.0px;color:#383838;font-weight:normal;font-family:'Liberation Sans', sans-serif;letter-spacing:-0.15px;">199 MΩ</div>
<div class="t" style="left:184.60px;top:372.60px;font-size:7.5px;line-height:9.0px;color:#383838;font-weight:normal;font-family:'Liberation Sans', sans-serif;letter-spacing:-0.15px;">Voulker</div>
<div class="t" style="left:288.80px;top:372.60px;font-size:7.5px;line-height:9.0px;color:#383838;font-weight:normal;font-family:'Liberation Sans', sans-serif;letter-spacing:-0.15px;">Josef</div>
<div class="t" style="left:392.80px;top:373.61px;font-size:7.7px;line-height:9.24px;color:#3c3c3c;font-weight:normal;font-family:'Liberation Mono', monospace;letter-spacing:-0.28px;">87F954333…</div>
<div class="t" style="left:455.10px;top:373.61px;font-size:7.7px;line-height:9.24px;color:#3c3c3c;font-weight:normal;font-family:'Liberation Mono', monospace;letter-spacing:-0.28px;">8</div>
<div class="t" style="left:559.40px;top:372.60px;font-size:7.5px;line-height:9.0px;color:#383838;font-weight:normal;font-family:'Liberation Sans', sans-serif;letter-spacing:-0.15px;">Endfertigung</div>
<div class="t" style="left:621.30px;top:372.51px;font-size:7.6px;line-height:9.12px;color:#383838;font-weight:normal;font-family:'Liberation Sans', sans-serif;letter-spacing:-0.15px;">01.09.2025</div>
<div class="t" style="right:389.80px;top:372.60px;font-size:7.5px;line-height:9.0px;color:#383838;font-weight:normal;font-family:'Liberation Sans', sans-serif;letter-spacing:-0.15px;">28.4 V</div>
<div class="t" style="right:353.60px;top:372.60px;font-size:7.5px;line-height:9.0px;color:#383838;font-weight:normal;font-family:'Liberation Sans', sans-serif;letter-spacing:-0.15px;">22 °C</div>
<div class="t" style="right:317.20px;top:372.60px;font-size:7.5px;line-height:9.0px;color:#383838;font-weight:normal;font-family:'Liberation Sans', sans-serif;letter-spacing:-0.15px;">34 %</div>
<svg style="position:absolute;left:1048.70px;top:373.40px" width="6.6" height="5" viewBox="0 0 6.6 5"><path d="M0.4 2.6 L2.4 4.4 L6.2 0.4" fill="none" stroke="#4aa84e" stroke-width="0.8"/></svg>
<div class="t" style="right:226.00px;top:372.60px;font-size:7.5px;line-height:9.0px;color:#383838;font-weight:normal;font-family:'Liberation Sans', sans-serif;letter-spacing:-0.15px;">47.0 MΩ</div>
<div class="t" style="right:176.80px;top:372.60px;font-size:7.5px;line-height:9.0px;color:#383838;font-weight:normal;font-family:'Liberation Sans', sans-serif;letter-spacing:-0.15px;">100 kΩ</div>
<div class="t" style="right:127.60px;top:372.60px;font-size:7.5px;line-height:9.0px;color:#383838;font-weight:normal;font-family:'Liberation Sans', sans-serif;letter-spacing:-0.15px;">73.0 MΩ</div>
<div class="t" style="right:77.90px;top:372.60px;font-size:7.5px;line-height:9.0px;color:#383838;font-weight:normal;font-family:'Liberation Sans', sans-serif;letter-spacing:-0.15px;">0 Ω</div>
<div class="t" style="right:28.70px;top:372.60px;font-size:7.5px;line-height:9.0px;color:#383838;font-weight:normal;font-family:'Liberation Sans', sans-serif;letter-spacing:-0.15px;">42.0 MΩ</div>
<div class="t" style="left:184.60px;top:398.00px;font-size:7.5px;line-height:9.0px;color:#383838;font-weight:normal;font-family:'Liberation Sans', sans-serif;letter-spacing:-0.15px;">Winter</div>
<div class="t" style="left:288.80px;top:398.00px;font-size:7.5px;line-height:9.0px;color:#383838;font-weight:normal;font-family:'Liberation Sans', sans-serif;letter-spacing:-0.15px;">Karl</div>
<div class="t" style="left:392.80px;top:399.01px;font-size:7.7px;line-height:9.24px;color:#3c3c3c;font-weight:normal;font-family:'Liberation Mono', monospace;letter-spacing:-0.28px;">F069B649C…</div>
<div class="t" style="left:455.10px;top:399.01px;font-size:7.7px;line-height:9.24px;color:#3c3c3c;font-weight:normal;font-family:'Liberation Mono', monospace;letter-spacing:-0.28px;">832</div>
<div class="t" style="left:559.40px;top:398.00px;font-size:7.5px;line-height:9.0px;color:#383838;font-weight:normal;font-family:'Liberation Sans', sans-serif;letter-spacing:-0.15px;">Halle A</div>
<div class="t" style="left:621.30px;top:397.91px;font-size:7.6px;line-height:9.12px;color:#383838;font-weight:normal;font-family:'Liberation Sans', sans-serif;letter-spacing:-0.15px;">31.08.2025</div>
<div class="t" style="right:389.80px;top:398.00px;font-size:7.5px;line-height:9.0px;color:#383838;font-weight:normal;font-family:'Liberation Sans', sans-serif;letter-spacing:-0.15px;">48.7 V</div>
<div class="t" style="right:353.60px;top:398.00px;font-size:7.5px;line-height:9.0px;color:#383838;font-weight:normal;font-family:'Liberation Sans', sans-serif;letter-spacing:-0.15px;">16 °C</div>
<div class="t" style="right:317.20px;top:398.00px;font-size:7.5px;line-height:9.0px;color:#383838;font-weight:normal;font-family:'Liberation Sans', sans-serif;letter-spacing:-0.15px;">42 %</div>
<svg style="position:absolute;left:1048.70px;top:398.80px" width="6.6" height="5" viewBox="0 0 6.6 5"><path d="M0.4 2.6 L2.4 4.4 L6.2 0.4" fill="none" stroke="#4aa84e" stroke-width="0.8"/></svg>
<div class="t" style="right:226.00px;top:398.00px;font-size:7.5px;line-height:9.0px;color:#383838;font-weight:normal;font-family:'Liberation Sans', sans-serif;letter-spacing:-0.15px;">99.0 MΩ</div>
<div class="t" style="right:176.80px;top:398.00px;font-size:7.5px;line-height:9.0px;color:#383838;font-weight:normal;font-family:'Liberation Sans', sans-serif;letter-spacing:-0.15px;">100 kΩ</div>
<div class="t" style="right:127.60px;top:398.00px;font-size:7.5px;line-height:9.0px;color:#383838;font-weight:normal;font-family:'Liberation Sans', sans-serif;letter-spacing:-0.15px;">189 MΩ</div>
<div class="t" style="right:77.90px;top:398.00px;font-size:7.5px;line-height:9.0px;color:#383838;font-weight:normal;font-family:'Liberation Sans', sans-serif;letter-spacing:-0.15px;">100 kΩ</div>
<div class="t" style="right:28.70px;top:398.00px;font-size:7.5px;line-height:9.0px;color:#383838;font-weight:normal;font-family:'Liberation Sans', sans-serif;letter-spacing:-0.15px;">199 MΩ</div>
<div class="t" style="left:184.60px;top:423.40px;font-size:7.5px;line-height:9.0px;color:#383838;font-weight:normal;font-family:'Liberation Sans', sans-serif;letter-spacing:-0.15px;">Voulker</div>
<div class="t" style="left:288.80px;top:423.40px;font-size:7.5px;line-height:9.0px;color:#383838;font-weight:normal;font-family:'Liberation Sans', sans-serif;letter-spacing:-0.15px;">Josef</div>
<div class="t" style="left:392.80px;top:424.41px;font-size:7.7px;line-height:9.24px;color:#3c3c3c;font-weight:normal;font-family:'Liberation Mono', monospace;letter-spacing:-0.28px;">87F954333…</div>
<div class="t" style="left:455.10px;top:424.41px;font-size:7.7px;line-height:9.24px;color:#3c3c3c;font-weight:normal;font-family:'Liberation Mono', monospace;letter-spacing:-0.28px;">8</div>
<div class="t" style="left:559.40px;top:423.40px;font-size:7.5px;line-height:9.0px;color:#383838;font-weight:normal;font-family:'Liberation Sans', sans-serif;letter-spacing:-0.15px;">Endfertigung</div>
<div class="t" style="left:621.30px;top:423.31px;font-size:7.6px;line-height:9.12px;color:#383838;font-weight:normal;font-family:'Liberation Sans', sans-serif;letter-spacing:-0.15px;">31.08.2025</div>
<div class="t" style="right:389.80px;top:423.40px;font-size:7.5px;line-height:9.0px;color:#383838;font-weight:normal;font-family:'Liberation Sans', sans-serif;letter-spacing:-0.15px;">31.1 V</div>
<div class="t" style="right:353.60px;top:423.40px;font-size:7.5px;line-height:9.0px;color:#383838;font-weight:normal;font-family:'Liberation Sans', sans-serif;letter-spacing:-0.15px;">22 °C</div>
<div class="t" style="right:317.20px;top:423.40px;font-size:7.5px;line-height:9.0px;color:#383838;font-weight:normal;font-family:'Liberation Sans', sans-serif;letter-spacing:-0.15px;">69 %</div>
<svg style="position:absolute;left:1048.70px;top:424.20px" width="6.6" height="5" viewBox="0 0 6.6 5"><path d="M0.4 2.6 L2.4 4.4 L6.2 0.4" fill="none" stroke="#4aa84e" stroke-width="0.8"/></svg>
<div class="t" style="right:226.00px;top:423.40px;font-size:7.5px;line-height:9.0px;color:#383838;font-weight:normal;font-family:'Liberation Sans', sans-serif;letter-spacing:-0.15px;">47.0 MΩ</div>
<div class="t" style="right:176.80px;top:423.40px;font-size:7.5px;line-height:9.0px;color:#383838;font-weight:normal;font-family:'Liberation Sans', sans-serif;letter-spacing:-0.15px;">100 kΩ</div>
<div class="t" style="right:127.60px;top:423.40px;font-size:7.5px;line-height:9.0px;color:#383838;font-weight:normal;font-family:'Liberation Sans', sans-serif;letter-spacing:-0.15px;">73.0 MΩ</div>
<div class="t" style="right:77.90px;top:423.40px;font-size:7.5px;line-height:9.0px;color:#383838;font-weight:normal;font-family:'Liberation Sans', sans-serif;letter-spacing:-0.15px;">0 Ω</div>
<div class="t" style="right:28.70px;top:423.40px;font-size:7.5px;line-height:9.0px;color:#383838;font-weight:normal;font-family:'Liberation Sans', sans-serif;letter-spacing:-0.15px;">42.0 MΩ</div>
<div class="t" style="left:184.60px;top:448.80px;font-size:7.5px;line-height:9.0px;color:#383838;font-weight:normal;font-family:'Liberation Sans', sans-serif;letter-spacing:-0.15px;">Schrader</div>
<div class="t" style="left:288.80px;top:448.80px;font-size:7.5px;line-height:9.0px;color:#383838;font-weight:normal;font-family:'Liberation Sans', sans-serif;letter-spacing:-0.15px;">Magdalena</div>
<div class="t" style="left:392.80px;top:449.81px;font-size:7.7px;line-height:9.24px;color:#3c3c3c;font-weight:normal;font-family:'Liberation Mono', monospace;letter-spacing:-0.28px;">5F88D16FE…</div>
<div class="t" style="left:455.10px;top:449.81px;font-size:7.7px;line-height:9.24px;color:#3c3c3c;font-weight:normal;font-family:'Liberation Mono', monospace;letter-spacing:-0.28px;">7</div>
<div class="t" style="left:559.40px;top:448.80px;font-size:7.5px;line-height:9.0px;color:#383838;font-weight:normal;font-family:'Liberation Sans', sans-serif;letter-spacing:-0.15px;">Halle A</div>
<div class="t" style="left:621.30px;top:448.71px;font-size:7.6px;line-height:9.12px;color:#383838;font-weight:normal;font-family:'Liberation Sans', sans-serif;letter-spacing:-0.15px;">31.08.2025</div>
<div class="t" style="right:524.90px;top:448.80px;font-size:7.5px;line-height:9.0px;color:#ee2e3a;font-weight:normal;font-family:'Liberation Sans', sans-serif;letter-spacing:-0.15px;">444 kΩ</div>
<svg style="position:absolute;left:781.80px;top:448.30px" width="6.4" height="6.4" viewBox="0 0 6.4 6.4"><g fill="none" stroke="#f0555e" stroke-width="0.55"><circle cx="3.2" cy="3.2" r="2.8"/><circle cx="3.2" cy="3.2" r="0.8" fill="#f0555e" stroke="none"/></g></svg>
<div class="t" style="right:475.60px;top:448.80px;font-size:7.5px;line-height:9.0px;color:#ee2e3a;font-weight:normal;font-family:'Liberation Sans', sans-serif;letter-spacing:-0.15px;">1.93 MΩ</div>
<svg style="position:absolute;left:831.10px;top:448.30px" width="6.4" height="6.4" viewBox="0 0 6.4 6.4"><g fill="none" stroke="#f0555e" stroke-width="0.55"><circle cx="3.2" cy="3.2" r="2.8"/><circle cx="3.2" cy="3.2" r="0.8" fill="#f0555e" stroke="none"/></g></svg>
<div class="t" style="right:425.80px;top:448.80px;font-size:7.5px;line-height:9.0px;color:#ee2e3a;font-weight:normal;font-family:'Liberation Sans', sans-serif;letter-spacing:-0.15px;">741 kΩ</div>
<svg style="position:absolute;left:880.90px;top:448.30px" width="6.4" height="6.4" viewBox="0 0 6.4 6.4"><g fill="none" stroke="#f0555e" stroke-width="0.55"><circle cx="3.2" cy="3.2" r="2.8"/><circle cx="3.2" cy="3.2" r="0.8" fill="#f0555e" stroke="none"/></g></svg>
<div class="t" style="right:389.80px;top:448.80px;font-size:7.5px;line-height:9.0px;color:#383838;font-weight:normal;font-family:'Liberation Sans', sans-serif;letter-spacing:-0.15px;">48.3 V</div>
<div class="t" style="right:353.60px;top:448.80px;font-size:7.5px;line-height:9.0px;color:#383838;font-weight:normal;font-family:'Liberation Sans', sans-serif;letter-spacing:-0.15px;">22 °C</div>
<div class="t" style="right:317.20px;top:448.80px;font-size:7.5px;line-height:9.0px;color:#383838;font-weight:normal;font-family:'Liberation Sans', sans-serif;letter-spacing:-0.15px;">41 %</div>
<svg style="position:absolute;left:1048.90px;top:449.30px" width="6.4" height="6.4" viewBox="0 0 6.4 6.4"><g fill="none" stroke="#f27c82" stroke-width="0.6"><circle cx="3.2" cy="3.2" r="2.75"/><circle cx="3.2" cy="3.2" r="0.85" fill="#f27c82" stroke="none"/></g></svg>
<div class="t" style="right:226.00px;top:448.80px;font-size:7.5px;line-height:9.0px;color:#383838;font-weight:normal;font-family:'Liberation Sans', sans-serif;letter-spacing:-0.15px;">99.0 MΩ</div>
<div class="t" style="right:176.80px;top:448.80px;font-size:7.5px;line-height:9.0px;color:#383838;font-weight:normal;font-family:'Liberation Sans', sans-serif;letter-spacing:-0.15px;">100 kΩ</div>
<div class="t" style="right:127.60px;top:448.80px;font-size:7.5px;line-height:9.0px;color:#383838;font-weight:normal;font-family:'Liberation Sans', sans-serif;letter-spacing:-0.15px;">189 MΩ</div>
<div class="t" style="right:77.90px;top:448.80px;font-size:7.5px;line-height:9.0px;color:#383838;font-weight:normal;font-family:'Liberation Sans', sans-serif;letter-spacing:-0.15px;">100 kΩ</div>
<div class="t" style="right:28.70px;top:448.80px;font-size:7.5px;line-height:9.0px;color:#383838;font-weight:normal;font-family:'Liberation Sans', sans-serif;letter-spacing:-0.15px;">199 MΩ</div>
<div class="t" style="left:184.60px;top:474.20px;font-size:7.5px;line-height:9.0px;color:#383838;font-weight:normal;font-family:'Liberation Sans', sans-serif;letter-spacing:-0.15px;">Frouhlich</div>
<div class="t" style="left:288.80px;top:474.20px;font-size:7.5px;line-height:9.0px;color:#383838;font-weight:normal;font-family:'Liberation Sans', sans-serif;letter-spacing:-0.15px;">Andrzej</div>
<div class="t" style="left:392.80px;top:475.21px;font-size:7.7px;line-height:9.24px;color:#3c3c3c;font-weight:normal;font-family:'Liberation Mono', monospace;letter-spacing:-0.28px;">efe345d52…</div>
<div class="t" style="left:455.10px;top:475.21px;font-size:7.7px;line-height:9.24px;color:#3c3c3c;font-weight:normal;font-family:'Liberation Mono', monospace;letter-spacing:-0.28px;">716734379</div>
<div class="t" style="left:559.40px;top:474.20px;font-size:7.5px;line-height:9.0px;color:#383838;font-weight:normal;font-family:'Liberation Sans', sans-serif;letter-spacing:-0.15px;">Qualitätssic…</div>
<div class="t" style="left:621.30px;top:474.11px;font-size:7.6px;line-height:9.12px;color:#383838;font-weight:normal;font-family:'Liberation Sans', sans-serif;letter-spacing:-0.15px;">31.08.2025</div>
<div class="t" style="right:524.90px;top:474.20px;font-size:7.5px;line-height:9.0px;color:#ee2e3a;font-weight:normal;font-family:'Liberation Sans', sans-serif;letter-spacing:-0.15px;">1.59 MΩ</div>
<svg style="position:absolute;left:781.80px;top:473.70px" width="6.4" height="6.4" viewBox="0 0 6.4 6.4"><g fill="none" stroke="#f0555e" stroke-width="0.55"><circle cx="3.2" cy="3.2" r="2.8"/><circle cx="3.2" cy="3.2" r="0.8" fill="#f0555e" stroke="none"/></g></svg>
<div class="t" style="right:475.60px;top:474.20px;font-size:7.5px;line-height:9.0px;color:#ee2e3a;font-weight:normal;font-family:'Liberation Sans', sans-serif;letter-spacing:-0.15px;">1.36 MΩ</div>
<svg style="position:absolute;left:831.10px;top:473.70px" width="6.4" height="6.4" viewBox="0 0 6.4 6.4"><g fill="none" stroke="#f0555e" stroke-width="0.55"><circle cx="3.2" cy="3.2" r="2.8"/><circle cx="3.2" cy="3.2" r="0.8" fill="#f0555e" stroke="none"/></g></svg>
<div class="t" style="right:389.80px;top:474.20px;font-size:7.5px;line-height:9.0px;color:#383838;font-weight:normal;font-family:'Liberation Sans', sans-serif;letter-spacing:-0.15px;">31.5 V</div>
<div class="t" style="right:353.60px;top:474.20px;font-size:7.5px;line-height:9.0px;color:#383838;font-weight:normal;font-family:'Liberation Sans', sans-serif;letter-spacing:-0.15px;">24 °C</div>
<div class="t" style="right:317.20px;top:474.20px;font-size:7.5px;line-height:9.0px;color:#383838;font-weight:normal;font-family:'Liberation Sans', sans-serif;letter-spacing:-0.15px;">42 %</div>
<svg style="position:absolute;left:1048.90px;top:474.70px" width="6.4" height="6.4" viewBox="0 0 6.4 6.4"><g fill="none" stroke="#f27c82" stroke-width="0.6"><circle cx="3.2" cy="3.2" r="2.75"/><circle cx="3.2" cy="3.2" r="0.85" fill="#f27c82" stroke="none"/></g></svg>
<div class="t" style="right:226.00px;top:474.20px;font-size:7.5px;line-height:9.0px;color:#383838;font-weight:normal;font-family:'Liberation Sans', sans-serif;letter-spacing:-0.15px;">96.0 MΩ</div>
<div class="t" style="right:176.80px;top:474.20px;font-size:7.5px;line-height:9.0px;color:#383838;font-weight:normal;font-family:'Liberation Sans', sans-serif;letter-spacing:-0.15px;">100 kΩ</div>
<div class="t" style="right:127.60px;top:474.20px;font-size:7.5px;line-height:9.0px;color:#383838;font-weight:normal;font-family:'Liberation Sans', sans-serif;letter-spacing:-0.15px;">45.0 MΩ</div>
<div class="t" style="right:77.90px;top:474.20px;font-size:7.5px;line-height:9.0px;color:#383838;font-weight:normal;font-family:'Liberation Sans', sans-serif;letter-spacing:-0.15px;">100 kΩ</div>
<div class="t" style="right:28.70px;top:474.20px;font-size:7.5px;line-height:9.0px;color:#383838;font-weight:normal;font-family:'Liberation Sans', sans-serif;letter-spacing:-0.15px;">179 MΩ</div>
</body></html>
